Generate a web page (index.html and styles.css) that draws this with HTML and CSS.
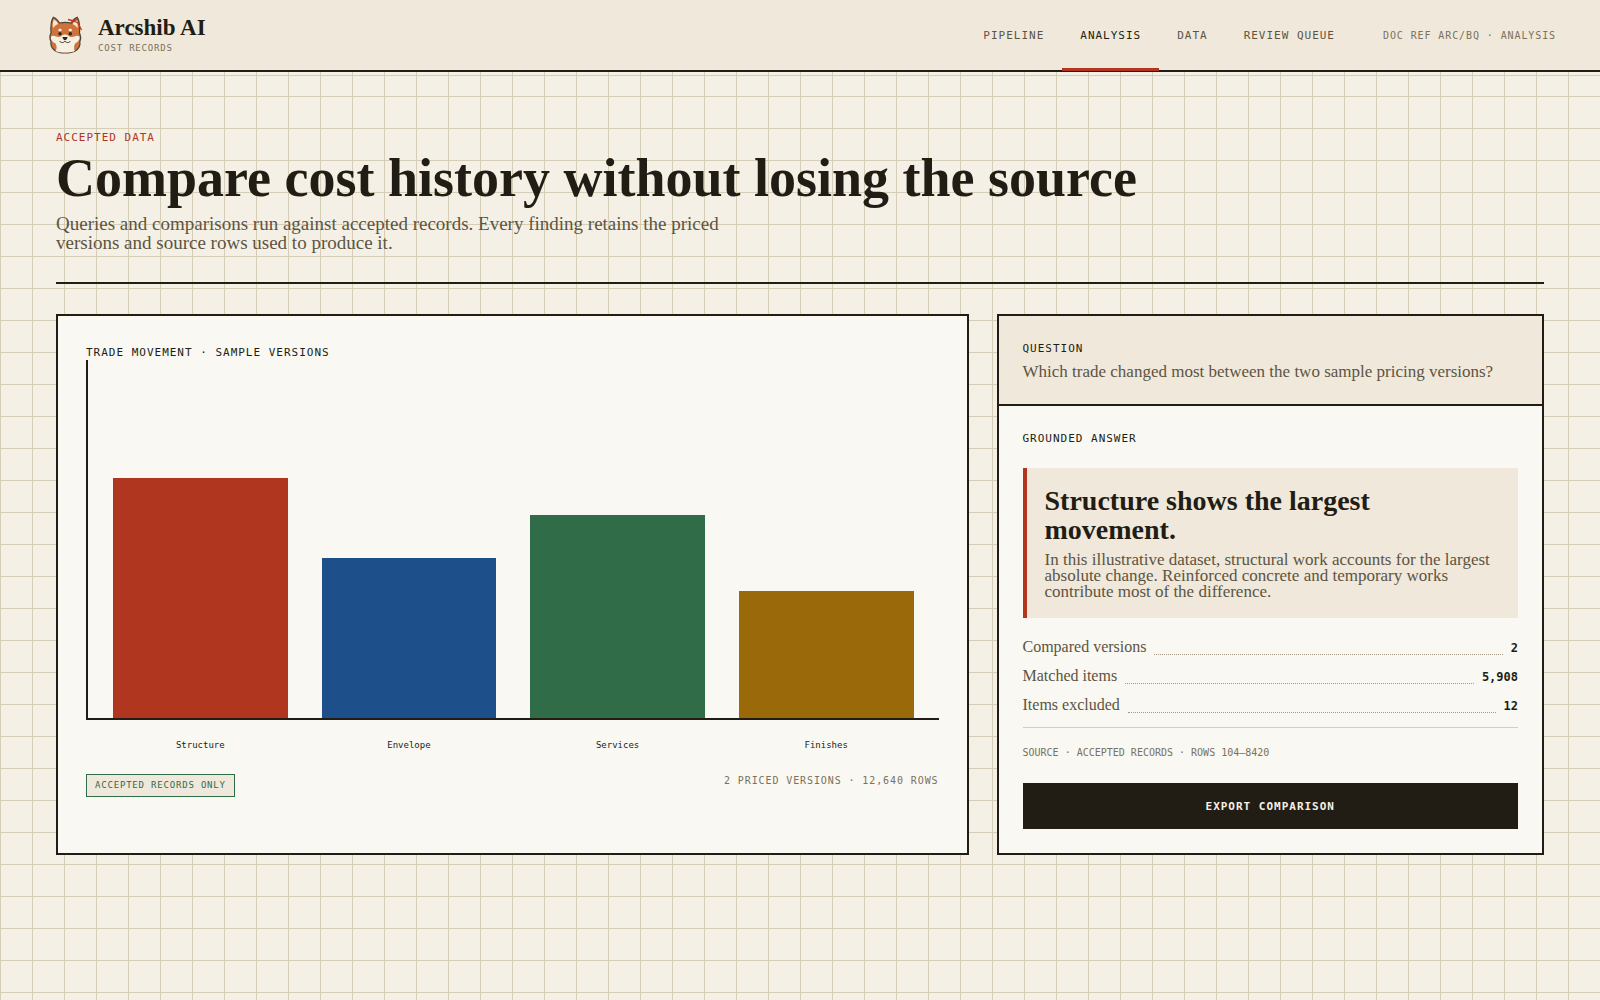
FILE: index.html
```
<!DOCTYPE html>
<html lang="en">
<head>
    <meta charset="UTF-8">
    <meta name="viewport" content="width=device-width, initial-scale=1.0">
    <title>Arcshib AI - Analysis</title>
    <link rel="stylesheet" href="styles.css">
</head>
<body>
    <header class="topbar">
        <a class="brand" href="#">
            <svg class="brand-logo" viewBox="0 0 38 38" aria-hidden="true">
                <path d="M5 17 C4.500 10 5.500 4 7.300 1.300 C10 2 12 4.500 13.500 7 C17 6.200 21.500 6.200 25 7 C26.500 4.500 28.500 2 31.300 1.300 C33 4 34 10 33.500 17 C34.800 20 35 23 33.800 25.500 C35 32 30 37 19 37 C9 37 4 32 5 25.500 C3.500 23 3.500 20 5 17 Z" fill="#cf733c" stroke="#4a4436" stroke-width="1.200"/>
                <path d="M7 12 C6.500 8 7 5 8 3.500 C10 4.500 11.500 6.500 12 8 C10 9 8 10.500 7 12 Z" fill="#f7e8d6"/>
                <path d="M31.500 12 C32 8 31.500 5 30.500 3.500 C28.500 4.500 27 6.500 26.500 8 C28.500 9 30.500 10.500 31.500 12 Z" fill="#f7e8d6"/>
                <path d="M5 20.500 C8 18.500 10.500 21.500 13 21 C15.500 20.500 16.500 18.500 19 18.500 C21.500 18.500 22.500 20.500 25 21 C28 21.500 30.500 18.500 33.500 20.500 C34 24 32 26 29 27.500 C27.500 31 28 34 29 35 C24 37 14 37 9.500 35 C11 33 11 30 9.500 27.500 C6 26 4.500 24 5 20.500 Z" fill="#f7efe2"/>
                <ellipse cx="14" cy="14" rx="1.700" ry="1.200" fill="#f7efe2"/>
                <ellipse cx="24.300" cy="14" rx="1.700" ry="1.200" fill="#f7efe2"/>
                <circle cx="14" cy="17.700" r="1.700" fill="#2b251b"/>
                <circle cx="24.300" cy="17.700" r="1.700" fill="#2b251b"/>
                <path d="M16.500 21 H21.500 C21.500 23 20 24.200 19 24.200 C18 24.200 16.500 23 16.500 21 Z" fill="#2b251b"/>
                <path d="M13.500 25 C15 27.200 18 27 19 25 C20 27 23 27.200 24.500 25" fill="none" stroke="#2b251b" stroke-width="0.900"/>
                <path d="M22 3.500 L28 5 L32 3 M28 5 L32 7 L35.500 14 M28 5 L25 8" fill="none" stroke="#c23a22" stroke-width="1.300"/>
            </svg>
            <span class="brand-text">
                <span class="brand-name">Arcshib AI</span>
                <span class="brand-sub">COST RECORDS</span>
            </span>
        </a>
        <nav class="nav">
            <a class="nav-link" href="#">PIPELINE</a>
            <a class="nav-link active" href="#">ANALYSIS</a>
            <a class="nav-link" href="#">DATA</a>
            <a class="nav-link" href="#">REVIEW QUEUE</a>
            <span class="doc-ref">DOC REF ARC/BQ · ANALYSIS</span>
        </nav>
    </header>

    <main class="page">
        <div class="page-header">
            <p class="eyebrow">ACCEPTED DATA</p>
            <h1>Compare cost history without losing the source</h1>
            <p class="lead">Queries and comparisons run against accepted records. Every finding retains the priced versions and source rows used to produce it.</p>
        </div>

        <div class="panels">
            <section class="card chart-card">
                <h2 class="label">TRADE MOVEMENT · SAMPLE VERSIONS</h2>
                <div class="chart">
                    <div class="bar bar-red" style="height: 240px"></div>
                    <div class="bar bar-blue" style="height: 160px"></div>
                    <div class="bar bar-green" style="height: 203px"></div>
                    <div class="bar bar-gold" style="height: 127px"></div>
                </div>
                <div class="chart-labels">
                    <span>Structure</span>
                    <span>Envelope</span>
                    <span>Services</span>
                    <span>Finishes</span>
                </div>
                <div class="chart-footer">
                    <span class="tag">ACCEPTED RECORDS ONLY</span>
                    <span class="chart-meta">2 PRICED VERSIONS · 12,640 ROWS</span>
                </div>
            </section>

            <section class="card">
                <div class="question">
                    <h2 class="label">QUESTION</h2>
                    <p class="copy">Which trade changed most between the two sample pricing versions?</p>
                </div>
                <div class="answer">
                    <h2 class="label">GROUNDED ANSWER</h2>
                    <div class="finding">
                        <h3>Structure shows the largest movement.</h3>
                        <p class="copy">In this illustrative dataset, structural work accounts for the largest absolute change. Reinforced concrete and temporary works contribute most of the difference.</p>
                    </div>
                    <dl class="stats">
                        <div class="stat-row">
                            <dt>Compared versions</dt>
                            <dd>2</dd>
                        </div>
                        <div class="stat-row">
                            <dt>Matched items</dt>
                            <dd>5,908</dd>
                        </div>
                        <div class="stat-row">
                            <dt>Items excluded</dt>
                            <dd>12</dd>
                        </div>
                    </dl>
                    <p class="source">SOURCE · ACCEPTED RECORDS · ROWS 104–8420</p>
                    <button class="btn" type="button">EXPORT COMPARISON</button>
                </div>
            </section>
        </div>
    </main>
</body>
</html>
```
FILE: styles.css
```
:root {
    --ink: #221d14;
    --muted: #5c5443;
    --soft: #7a715e;
    --paper: #f5f0e5;
    --sand: #f0e8da;
    --card: #f9f8f2;
    --line: #d6cdb6;
    --red: #b1361f;
    --blue: #1d4f8b;
    --green: #2f6c47;
    --gold: #9a690a;
    --mono: "DejaVu Sans Mono", "Liberation Mono", monospace;
    --serif: "Liberation Serif", "Times New Roman", serif;
}
* {
    box-sizing: border-box;
    margin: 0;
    padding: 0;
}
body {
    min-height: 100vh;
    font-family: var(--serif);
    color: var(--ink);
    background-color: var(--paper);
    background-image:
        linear-gradient(var(--line) 1px, transparent 1px),
        linear-gradient(90deg, var(--line) 1px, transparent 1px);
    background-size: 32px 32px;
}

/* Top bar */
.topbar {
    position: relative;
    display: flex;
    justify-content: space-between;
    height: 72px;
    padding: 0 44px 0 46px;
    background: var(--sand);
    border-bottom: 2px solid var(--ink);
}
.topbar::after {
    content: "";
    position: absolute;
    left: 0;
    right: 0;
    bottom: -6px;
    height: 1px;
    background: var(--line);
}
.brand {
    display: flex;
    align-items: center;
    gap: 14px;
    color: inherit;
    text-decoration: none;
}
.brand-logo {
    width: 38px;
    height: 38px;
}
.brand-text {
    display: flex;
    flex-direction: column;
}
.brand-name {
    font-size: 23px;
    font-weight: bold;
    line-height: 26px;
}
.brand-sub {
    font-family: var(--mono);
    font-size: 9px;
    line-height: 14px;
    letter-spacing: 0.09em;
    color: var(--soft);
}
.nav {
    display: flex;
    align-items: stretch;
    font-family: var(--mono);
}
.nav-link {
    position: relative;
    display: flex;
    align-items: center;
    padding: 0 18px;
    font-size: 11px;
    letter-spacing: 0.09em;
    color: var(--muted);
    text-decoration: none;
}
.nav-link.active {
    color: var(--ink);
}
.nav-link.active::after {
    content: "";
    position: absolute;
    left: 0;
    right: 0;
    bottom: -1px;
    z-index: 1;
    height: 3px;
    background: var(--red);
}
.doc-ref {
    align-self: center;
    margin-left: 30px;
    font-size: 10px;
    letter-spacing: 0.09em;
    color: var(--soft);
}

/* Page header */
.page {
    padding: 56px;
}
.page-header {
    padding-bottom: 30px;
    border-bottom: 2px solid var(--ink);
}
.eyebrow {
    font-family: var(--mono);
    font-size: 11px;
    line-height: 20px;
    letter-spacing: 0.09em;
    color: var(--red);
}
h1 {
    font-size: 54px;
    line-height: 60px;
}
.lead {
    max-width: 680px;
    margin-top: 6px;
    font-size: 19px;
    line-height: 19px;
    color: var(--muted);
}

/* Panels */
.panels {
    display: grid;
    grid-template-columns: 5fr 3fr;
    gap: 28px;
    margin-top: 30px;
}
.card {
    background: var(--card);
    border: 2px solid var(--ink);
}
.label {
    padding-top: 2px;
    font-family: var(--mono);
    font-size: 11px;
    font-weight: normal;
    line-height: 14px;
    letter-spacing: 0.09em;
}
.chart-card {
    padding: 28px;
}
.chart {
    display: grid;
    grid-template-columns: repeat(4, 1fr);
    gap: 34px;
    align-items: end;
    height: 360px;
    padding: 0 25px;
    border-left: 2px solid var(--ink);
    border-bottom: 2px solid var(--ink);
}
.bar-red {
    background: var(--red);
}
.bar-blue {
    background: var(--blue);
}
.bar-green {
    background: var(--green);
}
.bar-gold {
    background: var(--gold);
}
.chart-labels {
    display: grid;
    grid-template-columns: repeat(4, 1fr);
    gap: 34px;
    padding: 18px 25px 0 27px;
    font-family: var(--mono);
    font-size: 9px;
    line-height: 14px;
    text-align: center;
}
.chart-footer {
    display: flex;
    justify-content: space-between;
    align-items: flex-start;
    margin-top: 22px;
    font-family: var(--mono);
}
.tag {
    padding: 4px 8px;
    font-size: 9px;
    line-height: 13px;
    letter-spacing: 0.09em;
    color: var(--green);
    background: #efe8dc;
    border: 1px solid var(--green);
}
.chart-meta {
    font-size: 10px;
    line-height: 14px;
    letter-spacing: 0.09em;
    color: var(--soft);
}

/* Question and answer */
.question {
    padding: 24px;
    background: var(--sand);
    border-bottom: 2px solid var(--ink);
}
.copy {
    font-size: 17px;
    line-height: 16px;
    color: var(--muted);
}
.question .copy {
    margin-top: 8px;
}
.answer {
    padding: 24px;
}
.finding {
    margin-top: 22px;
    padding: 18px;
    background: var(--sand);
    border-left: 4px solid var(--red);
}
h3 {
    margin-bottom: 8px;
    font-size: 28px;
    line-height: 29px;
}
.stats {
    padding: 14px 0 8px;
    border-bottom: 1px solid var(--line);
}
.stat-row {
    display: flex;
    align-items: center;
    gap: 8px;
    padding: 6px 0;
    line-height: 17px;
}
.stat-row dt {
    display: flex;
    flex: 1;
    align-items: flex-end;
    gap: 8px;
    font-size: 16px;
    color: var(--muted);
}
.stat-row dt::after {
    content: "";
    flex: 1;
    border-bottom: 1px dotted #a39a86;
}
.stat-row dd {
    padding-top: 4px;
    font-family: var(--mono);
    font-size: 12px;
    font-weight: bold;
    line-height: 13px;
}
.source {
    margin-top: 17px;
    font-family: var(--mono);
    font-size: 10px;
    line-height: 16px;
    color: var(--soft);
}
.btn {
    display: block;
    width: 100%;
    height: 46px;
    margin-top: 22px;
    font-family: var(--mono);
    font-size: 11px;
    font-weight: bold;
    letter-spacing: 0.09em;
    color: var(--paper);
    background: var(--ink);
    border: none;
    cursor: pointer;
}
.btn:hover {
    opacity: 0.9;
}
```
